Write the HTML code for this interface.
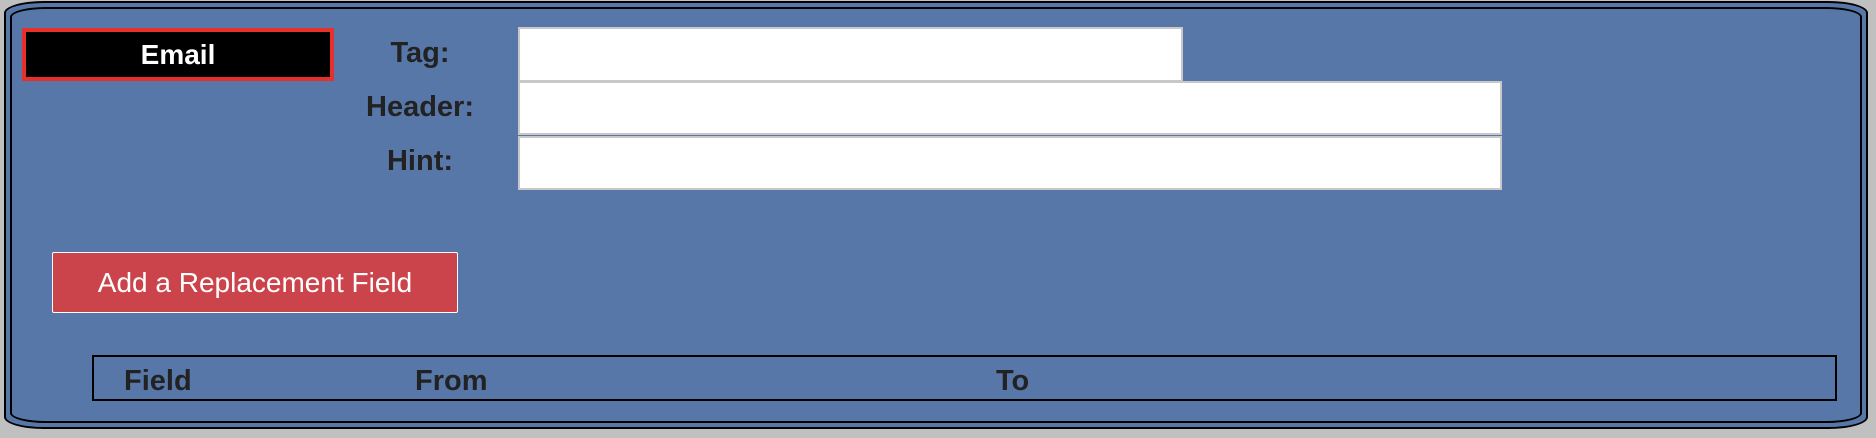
<!DOCTYPE html>
<html><head><meta charset="utf-8"><style>
html,body{margin:0;padding:0;width:1876px;height:438px;background:#c0c0c0;overflow:hidden;font-family:"Liberation Sans",Arial,sans-serif}
.outer{position:absolute;left:4px;top:1px;width:1860px;height:424px;border:2px solid #000;border-radius:40px/12px;background:#5877a9}
.inner{position:absolute;left:4px;top:4px;right:4px;bottom:4px;border:2px solid #000;border-radius:36px/10px}
.email{position:absolute;left:22px;top:28px;width:304px;height:45px;background:#000;border:4px solid #e8302a;color:#fff;font-weight:bold;font-size:28px;text-align:center;line-height:45px}
.lbl{position:absolute;width:160px;left:340px;text-align:center;font-weight:bold;font-size:29px;color:#222;line-height:30px}
.inp{position:absolute;left:518px;background:#fff;border:2px solid #c8c8c8;box-sizing:border-box}
.btn{position:absolute;left:52px;top:252px;width:406px;height:61px;box-sizing:border-box;background:#cc444b;border:1px solid #fff;border-radius:2px;color:#fff;font-size:28px;text-align:center;line-height:59px}
.tbl{position:absolute;left:92px;top:355px;width:1745px;height:46px;box-sizing:border-box;border:2px solid #000}
.th{position:absolute;top:364px;font-weight:bold;font-size:29px;color:#222;line-height:34px}
</style></head><body>
<div class="outer"><div class="inner"></div></div>
<div class="email">Email</div>
<div class="lbl" style="top:38px">Tag:</div>
<div class="lbl" style="top:92px">Header:</div>
<div class="lbl" style="top:146px">Hint:</div>
<div class="inp" style="top:27px;width:665px;height:55px"></div>
<div class="inp" style="top:81px;width:984px;height:54px"></div>
<div class="inp" style="top:136px;width:984px;height:54px"></div>
<div class="btn">Add a Replacement Field</div>
<div class="tbl"></div>
<div class="th" style="left:124px">Field</div>
<div class="th" style="left:415px">From</div>
<div class="th" style="left:996px">To</div>
</body></html>
